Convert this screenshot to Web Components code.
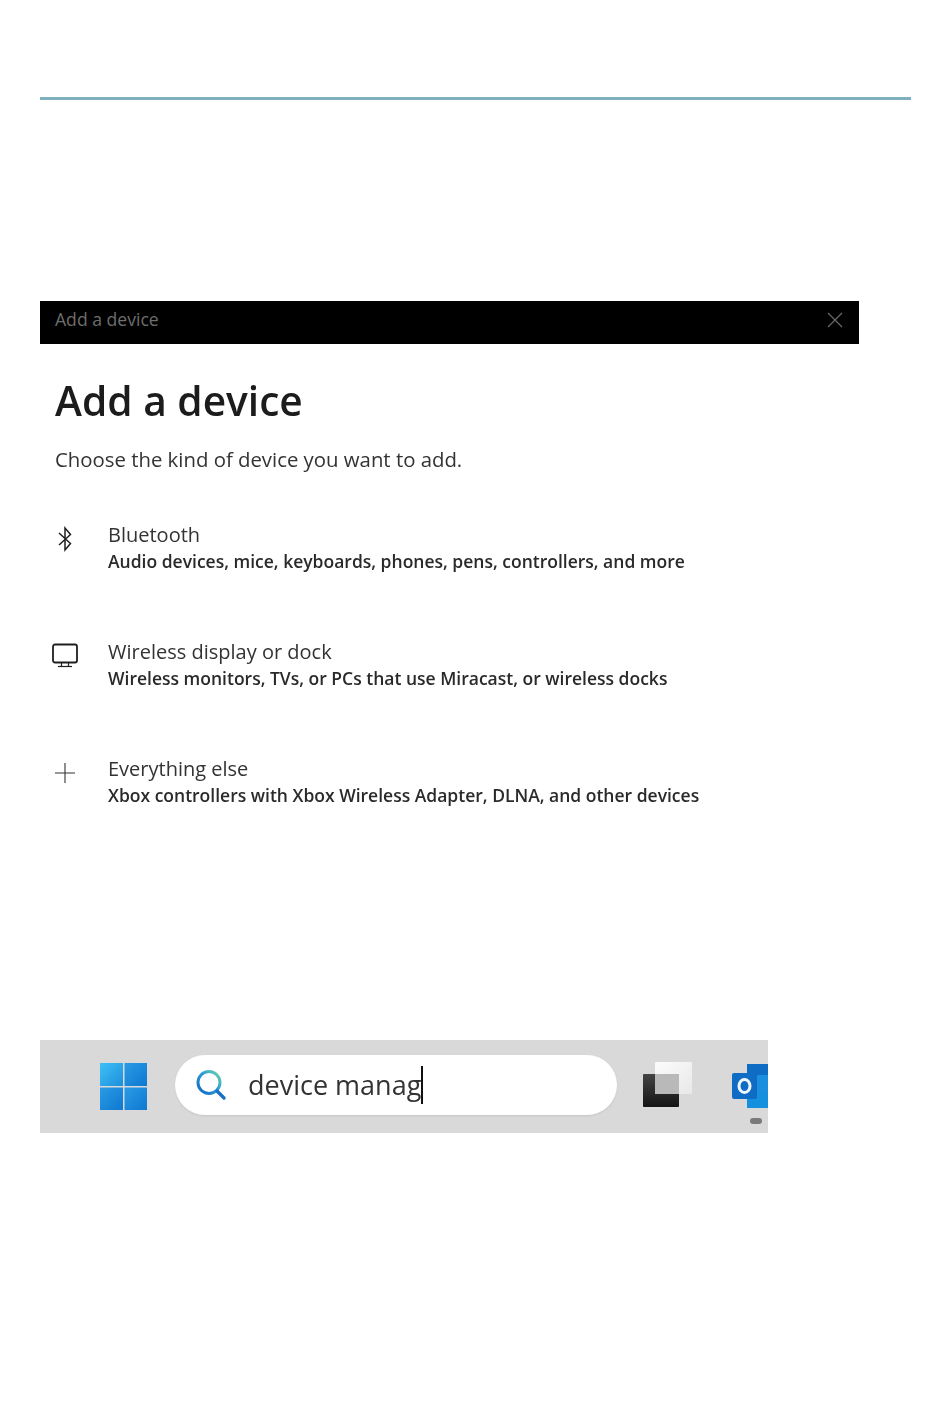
<!DOCTYPE html>
<html lang="en">
<head>
<meta charset="utf-8">
<title>Add a device</title>
<style>
  html, body { margin: 0; background: #fff; }
  body { font-family: "Open Sans", "Noto Sans", sans-serif; height: 1425px; overflow: hidden; }
</style>
</head>
<body>
<doc-page>
  <add-device-dialog>
    <device-option title="Bluetooth" desc="Audio devices, mice, keyboards, phones, pens, controllers, and more">
      <svg slot="icon" width="20" height="28" viewBox="0 0 20 28" fill="none" stroke="#1f1f1f" stroke-width="1.5"><path d="M4 8 15.5 18.5 10 25V3L15.5 9.5 4 20"/></svg>
    </device-option>
    <device-option title="Wireless display or dock" desc="Wireless monitors, TVs, or PCs that use Miracast, or wireless docks">
      <svg slot="icon" width="26" height="26" viewBox="0 0 26 26" fill="none" stroke="#1f1f1f"><rect x="1" y="1.5" width="24" height="18" rx="2" stroke-width="1.8"/><path d="M9.5 20v3.5M16.5 20v3.5" stroke-width="1.2"/><path d="M6 23.5h14" stroke-width="1.2"/></svg>
    </device-option>
    <device-option title="Everything else" desc="Xbox controllers with Xbox Wireless Adapter, DLNA, and other devices">
      <svg slot="icon" width="22" height="22" viewBox="0 0 22 22" fill="none" stroke="#333" stroke-width="1.1"><path d="M11 1v20M1 11h20"/></svg>
    </device-option>
  </add-device-dialog>
  <search-taskbar query="device manag"></search-taskbar>
</doc-page>

<script>
// page frame: teal rule on top, then the two screenshots stacked
class DocPage extends HTMLElement {
  connectedCallback() {
    this.attachShadow({ mode: "open" });
    this.shadowRoot.innerHTML = `
      <style>
        :host { display: block; padding: 97px 39px 0 40px; }
        .rule { height: 3px; background: #7fb1bc; }
        .stack { display: flex; flex-direction: column; padding-top: 201px; }
      </style>
      <div class="rule"></div>
      <div class="stack"><slot></slot></div>
    `;
  }
}

class AddDeviceDialog extends HTMLElement {
  connectedCallback() {
    this.attachShadow({ mode: "open" });
    this.shadowRoot.innerHTML = `
      <style>
        :host { display: block; width: 819px; height: 739px; filter: blur(0.35px); }
        .bar {
          height: 43px;
          background: #000;
          color: #6e6e6e;
          display: flex;
          align-items: center;
          justify-content: space-between;
          padding: 0 16px 8px 15px;
          box-sizing: border-box;
          font-size: 17.6px;
        }
        .bar svg { display: block; margin-top: 4px; margin-bottom: 2px; }
        h1 {
          margin: 28px 0 0 15px;
          font-size: 40.7px;
          line-height: 56px;
          font-weight: 600;
          color: #1c1c1c;
        }
        p {
          margin: 17px 0 47px 15px;
          font-size: 20.35px;
          line-height: 28px;
          color: #333;
        }
        .opts { display: flex; flex-direction: column; gap: 60px; }
      </style>
      <div class="bar">
        <span>Add a device</span>
        <svg width="16" height="16" viewBox="0 0 16 16" stroke="#6a6a6a" stroke-width="1.2"><path d="M1 1l14 14M15 1L1 15"/></svg>
      </div>
      <h1>Add a device</h1>
      <p>Choose the kind of device you want to add.</p>
      <div class="opts"><slot></slot></div>
    `;
  }
}

class DeviceOption extends HTMLElement {
  connectedCallback() {
    this.attachShadow({ mode: "open" });
    this.shadowRoot.innerHTML = `
      <style>
        :host { display: grid; grid-template-columns: 68px 1fr; height: 57px; }
        .icon { display: flex; justify-content: center; width: 50px; align-items: center; height: 38px; }
        .title { font-size: 20px; line-height: 29px; color: #333; }
        .desc { font-size: 17.5px; line-height: 24px; font-weight: 600; color: #2a2a2a; white-space: nowrap; }
      </style>
      <div class="icon"><slot name="icon"></slot></div>
      <div>
        <div class="title"></div>
        <div class="desc"></div>
      </div>
    `;
    this.shadowRoot.querySelector(".title").textContent = this.getAttribute("title");
    this.shadowRoot.querySelector(".desc").textContent = this.getAttribute("desc");
  }
}

class SearchTaskbar extends HTMLElement {
  connectedCallback() {
    this.attachShadow({ mode: "open" });
    this.shadowRoot.innerHTML = `
      <style>
        :host { display: block; width: 728px; height: 93px; filter: blur(0.35px); }
        .bar {
          height: 100%;
          background: #d9d9d9;
          display: flex;
          align-items: center;
          padding-left: 60px;
          box-sizing: border-box;
          overflow: hidden;
        }
        svg { display: block; flex: none; }
        .search {
          flex: none;
          width: 442px;
          height: 60px;
          margin: 0 0 4px 28px;
          border-radius: 30px;
          background: #fff;
          display: flex;
          align-items: center;
          padding-left: 20px;
          box-sizing: border-box;
          box-shadow: 0 1px 2px #c6c6c6;
        }
        .q {
          margin-left: 21px;
          font-size: 27px;
          line-height: 38px;
          color: #333;
          border-right: 2px solid #111;
        }
        .outlook { position: relative; margin-left: 39px; }
        .dot { position: absolute; left: 18px; top: 55px; width: 12px; height: 6px; border-radius: 3px; background: #7a7a7a; }
      </style>
      <div class="bar">
        <svg width="47" height="47" viewBox="0 0 47 47">
          <defs>
            <linearGradient id="w1" x1="0" y1="0" x2="1" y2="1"><stop offset="0" stop-color="#3fc0f6"/><stop offset="1" stop-color="#1c8fdc"/></linearGradient>
            <linearGradient id="w2" x1="0" y1="0" x2="1" y2="1"><stop offset="0" stop-color="#2a9be6"/><stop offset="1" stop-color="#0e78d0"/></linearGradient>
          </defs>
          <rect width="23" height="23" fill="url(#w1)"/>
          <rect x="24.5" width="22.5" height="23" fill="url(#w2)"/>
          <rect y="24.5" width="23" height="22.5" fill="url(#w2)"/>
          <rect x="24.5" y="24.5" width="22.5" height="22.5" fill="url(#w2)"/>
        </svg>
        <div class="search">
          <svg width="32" height="32" viewBox="0 0 32 32" fill="none">
            <defs>
              <linearGradient id="lens" x1="1" y1="0" x2="0" y2="1"><stop offset="0" stop-color="#6fd8a6"/><stop offset=".45" stop-color="#2a9bd8"/><stop offset="1" stop-color="#1269c2"/></linearGradient>
            </defs>
            <circle cx="14" cy="13.5" r="11" stroke="url(#lens)" stroke-width="3"/>
            <path d="M22 22l7 7" stroke="#1a72c4" stroke-width="3.4" stroke-linecap="round"/>
          </svg>
          <span class="q"></span>
        </div>
        <svg width="50" height="46" viewBox="0 0 50 46" style="margin:0 0 3px 26px">
          <defs>
            <linearGradient id="tv1" x1="0" y1="0" x2="1" y2="1"><stop offset="0" stop-color="#fcfcfc"/><stop offset="1" stop-color="#e8e8e8"/></linearGradient>
            <linearGradient id="tv2" x1="0" y1="0" x2="0" y2="1"><stop offset="0" stop-color="#444"/><stop offset="1" stop-color="#141414"/></linearGradient>
          </defs>
          <rect x="12" y="0" width="37" height="32" rx="1" fill="url(#tv1)"/>
          <rect x="0" y="12" width="36" height="33" rx="1" fill="url(#tv2)"/>
          <rect x="12" y="12" width="24" height="20" fill="#b9b9b9"/>
        </svg>
        <div class="outlook">
          <svg width="37" height="48" viewBox="0 0 37 48">
            <rect x="15" y="1" width="30" height="44" rx="2" fill="#1a8ee0"/>
            <rect x="15" y="1" width="30" height="11" fill="#0f6cc4"/>
            <path d="M15 30 45 32V45H15Z" fill="#1490df"/>
            <rect x="0" y="10" width="25" height="26" rx="2" fill="#0f6cc4"/>
            <ellipse cx="12.5" cy="23" rx="5.5" ry="6.5" fill="none" stroke="#f0f6fb" stroke-width="3"/>
          </svg>
          <div class="dot"></div>
        </div>
      </div>
    `;
    this.shadowRoot.querySelector(".q").textContent = this.getAttribute("query");
  }
}

customElements.define("doc-page", DocPage);
customElements.define("add-device-dialog", AddDeviceDialog);
customElements.define("device-option", DeviceOption);
customElements.define("search-taskbar", SearchTaskbar);
</script>
</body>
</html>
